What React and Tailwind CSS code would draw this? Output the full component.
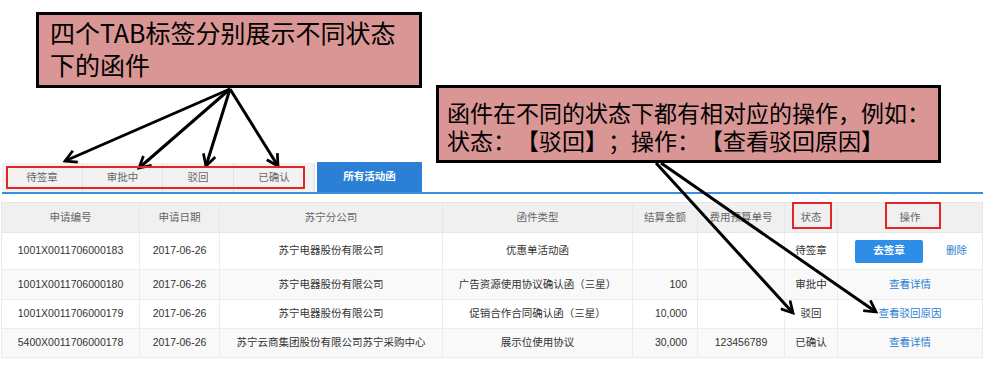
import React from 'react';

const rows = [
  { no: '1001X0011706000183', date: '2017-06-26', company: '苏宁电器股份有限公司', type: '优惠单活动函', amount: '', budget: '', status: '待签章', op: 'sign', h: 'h-[37px]', bg: 'bg-white' },
  { no: '1001X0011706000180', date: '2017-06-26', company: '苏宁电器股份有限公司', type: '广告资源使用协议确认函（三星）', amount: '100', budget: '', status: '审批中', op: '查看详情', h: 'h-[30px]', bg: 'bg-[#f9f9f9]' },
  { no: '1001X0011706000179', date: '2017-06-26', company: '苏宁电器股份有限公司', type: '促销合作合同确认函（三星）', amount: '10,000', budget: '', status: '驳回', op: '查看驳回原因', h: 'h-[29px]', bg: 'bg-white' },
  { no: '5400X0011706000178', date: '2017-06-26', company: '苏宁云商集团股份有限公司苏宁采购中心', type: '展示位使用协议', amount: '30,000', budget: '123456789', status: '已确认', op: '查看详情', h: 'h-[29px]', bg: 'bg-[#f9f9f9]' }
];

const tabs = [
  { label: '待签章', w: 'w-[81px]' },
  { label: '审批中', w: 'w-[80px]' },
  { label: '驳回', w: 'w-[71px]' },
  { label: '已确认', w: 'w-[81px]' }
];

function Arrows() {
  return (
    <svg className="absolute inset-0 pointer-events-none" width="1000" height="386" viewBox="0 0 1000 386">
      <defs>
        <marker id="head" viewBox="0 0 12 12" refX="10" refY="6" markerWidth="5" markerHeight="5" orient="auto" markerUnits="strokeWidth">
          <path d="M1,1 L10,6 L1,11" fill="none" stroke="#000" strokeWidth="2.2" />
        </marker>
      </defs>
      <g stroke="#000" strokeWidth="3" fill="none" markerEnd="url(#head)">
        <line x1="230" y1="89" x2="65" y2="161" />
        <line x1="230" y1="89" x2="139" y2="168" />
        <line x1="230" y1="89" x2="206" y2="166" />
        <line x1="230" y1="89" x2="278" y2="166" />
        <line x1="656" y1="163" x2="793" y2="313" />
        <line x1="661" y1="163" x2="876" y2="312" />
      </g>
      <g stroke="#e02626" strokeWidth="2" fill="none">
        <rect x="7" y="167" width="297" height="21" />
        <rect x="793" y="203" width="38" height="25" />
        <rect x="886" y="203" width="54" height="25" />
      </g>
    </svg>
  );
}

export default function App() {
  return (
    <div className="relative w-[1000px] h-[386px] bg-white overflow-hidden font-['Liberation_Sans','Noto_Sans_CJK_SC',sans-serif] text-[10.5px] text-[#333]">
      <div className="pt-[162px] pl-[2px]">
        {/* Tabs */}
        <div className="flex items-end w-[981px] h-[32px] border-b-2 border-[#3a8ee0]">
          {tabs.map((t, i) => (
            <div key={i} className={`${t.w} h-[29px] flex items-center justify-center bg-[#f2f2f2] border-r border-[#e2e2e2] text-[#666]`}>
              {t.label}
            </div>
          ))}
          <div className="w-[2px]" />
          <div className="w-[105px] h-[30px] flex items-center justify-center bg-[#2b80d6] text-white font-bold">
            所有活动函
          </div>
        </div>

        {/* Table */}
        <table className="mt-[8px] -ml-[1px] border-collapse table-fixed w-[981px] text-center">
          <colgroup>
            <col className="w-[138px]" />
            <col className="w-[80px]" />
            <col className="w-[223px]" />
            <col className="w-[190px]" />
            <col className="w-[65px]" />
            <col className="w-[87px]" />
            <col className="w-[53px]" />
            <col className="w-[145px]" />
          </colgroup>
          <thead>
            <tr className="h-[30px] bg-[#f0f0f0] text-[#666]">
              {['申请编号', '申请日期', '苏宁分公司', '函件类型', '结算金额', '费用预算单号', '状态', '操作'].map((h, i) => (
                <th key={i} className="font-normal border border-[#e6e6e6] p-0">{h}</th>
              ))}
            </tr>
          </thead>
          <tbody>
            {rows.map((r, i) => (
              <tr key={i} className={`${r.h} ${r.bg}`}>
                <td className="border border-[#ececec] p-0">{r.no}</td>
                <td className="border border-[#ececec] p-0">{r.date}</td>
                <td className="border border-[#ececec] p-0">{r.company}</td>
                <td className="border border-[#ececec] p-0">{r.type}</td>
                <td className="border border-[#ececec] p-0 text-right pr-[10px]">{r.amount}</td>
                <td className="border border-[#ececec] p-0">{r.budget}</td>
                <td className="border border-[#ececec] p-0">{r.status}</td>
                <td className="border border-[#ececec] p-0">
                  {r.op === 'sign' ? (
                    <div className="flex items-center pl-[17px]">
                      <button className="w-[68px] h-[23px] bg-[#2e8de6] text-white rounded-[2px] font-bold">去签章</button>
                      <span className="ml-[23px] text-[#2b7fd4]">删除</span>
                    </div>
                  ) : (
                    <span className="text-[#2b7fd4]">{r.op}</span>
                  )}
                </td>
              </tr>
            ))}
          </tbody>
        </table>
      </div>

      {/* Annotation callouts */}
      <div className="absolute left-[36px] top-[12px] w-[386px] h-[76px] bg-[#d99694] border-[3px] border-black pl-[11px] pt-[1px] font-['Noto_Sans_CJK_SC',sans-serif] text-[25px] leading-[32px] text-black">
        <div>四个TAB标签分别展示不同状态</div>
        <div>下的函件</div>
      </div>
      <div className="absolute left-[436px] top-[85px] w-[505px] h-[78px] bg-[#d99694] border-[3px] border-black pl-[8px] pt-[10px] font-['Noto_Sans_CJK_SC',sans-serif] text-[23px] leading-[28px] text-black whitespace-nowrap [text-spacing-trim:space-all]">
        <div>函件在不同的状态下都有相对应的操作，例如：</div>
        <div>状态：【驳回】；操作：【查看驳回原因】</div>
      </div>

      <Arrows />
    </div>
  );
}
